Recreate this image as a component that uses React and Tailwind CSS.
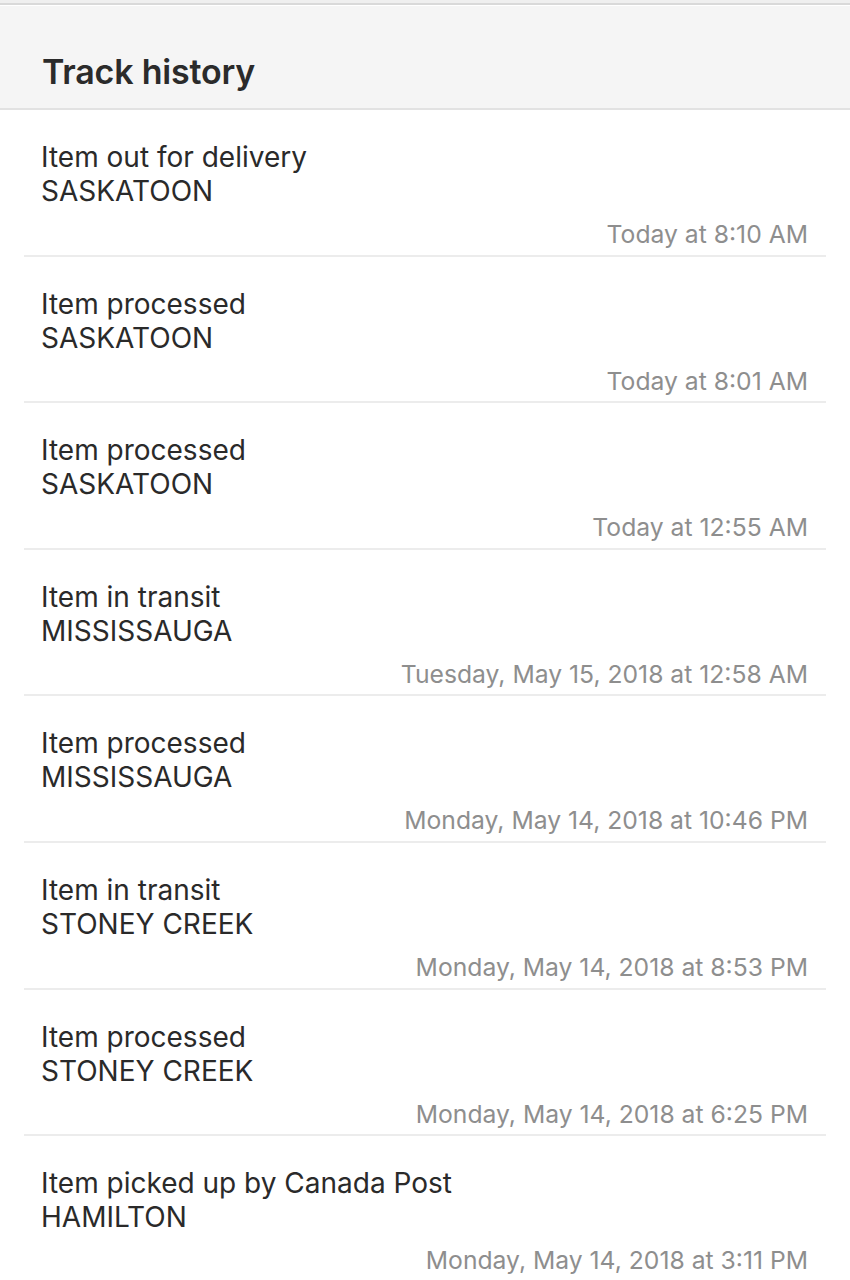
import React from "react";

const items = [
  ["Item out for delivery", "SASKATOON", "Today at 8:10 AM"],
  ["Item processed", "SASKATOON", "Today at 8:01 AM"],
  ["Item processed", "SASKATOON", "Today at 12:55 AM"],
  ["Item in transit", "MISSISSAUGA", "Tuesday, May 15, 2018 at 12:58 AM"],
  ["Item processed", "MISSISSAUGA", "Monday, May 14, 2018 at 10:46 PM"],
  ["Item in transit", "STONEY CREEK", "Monday, May 14, 2018 at 8:53 PM"],
  ["Item processed", "STONEY CREEK", "Monday, May 14, 2018 at 6:25 PM"],
  ["Item picked up by Canada Post", "HAMILTON", "Monday, May 14, 2018 at 3:11 PM"],
];

export default function App() {
  return (
    <div
      className="w-[850px] h-[1280px] overflow-hidden bg-white"
      style={{ fontFamily: "Inter, 'Noto Sans', sans-serif" }}
    >
      <div className="h-[3px] bg-[#efefef]" />
      <div className="h-[2px] bg-[#d9d9d9]" />
      <div className="h-[1px] bg-white" />
      <div className="h-[104px] bg-[#f5f5f5] border-b-2 border-[#e2e2e2] flex items-end pl-[42px] pb-[16px]">
        <h1 className="text-[34px] leading-[40px] font-semibold text-[#2b2b2b] tracking-[-0.2px]">
          Track history
        </h1>
      </div>
      <div className="px-[24px]">
        {items.map(([title, place, time], i) => (
          <div
            key={i}
            className={`pt-[30px] pb-[5.6px] ${
              i < items.length - 1 ? "border-b-2 border-[#ececec]" : ""
            }`}
          >
            <div className="pl-[17px] text-[28px] leading-[34px] text-[#2a2a2a]">
              <div>{title}</div>
              <div>{place}</div>
            </div>
            <div className="mt-[11px] pr-[18px] text-right text-[24.7px] leading-[30px] text-[#8e8e8e]">
              {time}
            </div>
          </div>
        ))}
      </div>
    </div>
  );
}
